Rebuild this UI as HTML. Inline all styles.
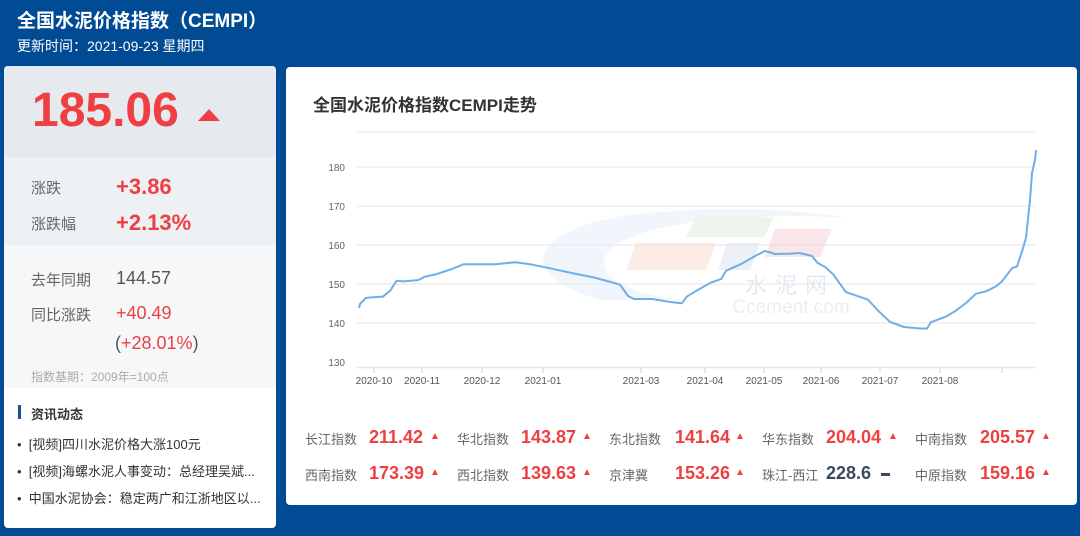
<!DOCTYPE html>
<html><head><meta charset="utf-8"><style>
*{margin:0;padding:0;box-sizing:border-box}
body{width:1080px;height:536px;background:#014a94;font-family:"Liberation Sans","Noto Sans CJK SC",sans-serif;position:relative;overflow:hidden}
.abs{position:absolute;white-space:nowrap}
.red{color:#ee3f42}
.lbl{color:#666;font-size:15px}
</style></head><body>
<div class="abs" style="left:17px;top:6px;color:#fff;font-size:19px;font-weight:bold">全国水泥价格指数（CEMPI）</div>
<div class="abs" style="left:17px;top:36px;color:#fff;font-size:14px">更新时间：2021-09-23 星期四</div>

<div class="abs" style="left:4px;top:66px;width:272px;height:462px;background:#fff;border-radius:4px;overflow:hidden">
 <div style="height:91px;background:#e6eaef"></div>
 <div style="height:88px;background:#eef1f4"></div>
 <div style="height:143px;background:#f5f7f9"></div>
</div>
<div class="abs red" style="left:32px;top:83px;font-size:48px;font-weight:bold">185.06</div>
<div class="abs" style="left:198px;top:109px;width:0;height:0;border-left:11px solid transparent;border-right:11px solid transparent;border-bottom:12px solid #ee3f42"></div>
<div class="abs lbl" style="left:31px;top:177px">涨跌</div>
<div class="abs red" style="left:116px;top:174px;font-size:22px;font-weight:bold">+3.86</div>
<div class="abs lbl" style="left:31px;top:213px">涨跌幅</div>
<div class="abs red" style="left:116px;top:210px;font-size:22px;font-weight:bold">+2.13%</div>
<div class="abs lbl" style="left:31px;top:269px">去年同期</div>
<div class="abs" style="left:116px;top:268px;font-size:18px;color:#555">144.57</div>
<div class="abs lbl" style="left:31px;top:304px">同比涨跌</div>
<div class="abs red" style="left:116px;top:303px;font-size:18px">+40.49</div>
<div class="abs" style="left:115px;top:333px;font-size:18px;color:#555">(<span class="red">+28.01%</span>)</div>
<div class="abs" style="left:31px;top:368px;font-size:12px;color:#aaa">指数基期：2009年=100点</div>
<div class="abs" style="left:18px;top:405px;width:3px;height:14px;background:#1a4d9a"></div>
<div class="abs" style="left:31px;top:404px;font-size:13px;font-weight:bold;color:#333">资讯动态</div>
<div class="abs" style="left:17px;top:434px;font-size:13px;color:#333">•&nbsp; [视频]四川水泥价格大涨100元</div>
<div class="abs" style="left:17px;top:461px;font-size:13px;color:#333">•&nbsp; [视频]海螺水泥人事变动：总经理吴斌...</div>
<div class="abs" style="left:17px;top:488px;font-size:13px;color:#333">•&nbsp; 中国水泥协会：稳定两广和江浙地区以...</div>

<div class="abs" style="left:286px;top:67px;width:791px;height:438px;background:#fff;border-radius:4px"></div>
<div class="abs" style="left:313px;top:91px;font-size:17px;font-weight:bold;color:#333">全国水泥价格指数CEMPI走势</div>

<svg class="abs" style="left:0;top:0" width="1080" height="536">
 <g font-family="Liberation Sans" font-size="10" fill="#666" text-anchor="end">
  <text x="345" y="171">180</text><text x="345" y="210">170</text><text x="345" y="249">160</text><text x="345" y="288">150</text><text x="345" y="327">140</text><text x="345" y="366">130</text>
 </g>
 <g stroke="#e6e6e6" stroke-width="1">
  <line x1="357" y1="132" x2="1035" y2="132"/>
  <line x1="357" y1="167" x2="1035" y2="167"/><line x1="357" y1="206" x2="1035" y2="206"/><line x1="357" y1="245" x2="1035" y2="245"/><line x1="357" y1="284" x2="1035" y2="284"/><line x1="357" y1="323" x2="1035" y2="323"/>
 </g>
 <line x1="357" y1="367.5" x2="1035" y2="367.5" stroke="#dde3ee" stroke-width="1.5"/>
 <g stroke="#c8d3e6"><line x1="374" y1="368" x2="374" y2="373"/><line x1="422" y1="368" x2="422" y2="373"/><line x1="482" y1="368" x2="482" y2="373"/><line x1="543" y1="368" x2="543" y2="373"/><line x1="641" y1="368" x2="641" y2="373"/><line x1="705" y1="368" x2="705" y2="373"/><line x1="764" y1="368" x2="764" y2="373"/><line x1="821" y1="368" x2="821" y2="373"/><line x1="880" y1="368" x2="880" y2="373"/><line x1="940" y1="368" x2="940" y2="373"/><line x1="1002" y1="368" x2="1002" y2="373"/></g>
 <g font-family="Liberation Sans" font-size="10" fill="#555" text-anchor="middle">
  <text x="374" y="384">2020-10</text><text x="422" y="384">2020-11</text><text x="482" y="384">2020-12</text><text x="543" y="384">2021-01</text><text x="641" y="384">2021-03</text><text x="705" y="384">2021-04</text><text x="764" y="384">2021-05</text><text x="821" y="384">2021-06</text><text x="880" y="384">2021-07</text><text x="940" y="384">2021-08</text>
 </g>
 <g opacity="0.5">
  <path d="M600 300 C500 270 540 220 660 212 C740 206 800 210 850 218 C760 212 640 220 610 250 C590 272 620 292 680 300 Z" fill="#e3eef8"/>
  <polygon points="696,217 774,217 764,237 686,237" fill="#e2ecd8"/>
  <polygon points="636,243 716,243 706,270 626,270" fill="#f8dccd"/>
  <polygon points="727,243 760,243 750,270 718,270" fill="#dde3f0"/>
  <polygon points="775,229 832,229 820,257 765,257" fill="#f6cfd2"/>
  <text x="790" y="293" font-size="22" fill="#c9d6e6" font-family="Noto Sans CJK SC" text-anchor="middle" letter-spacing="8">水泥网</text>
  <text x="791" y="313" font-size="19" fill="#d8dde3" text-anchor="middle">Ccement.com</text>
 </g>
 <polyline fill="none" stroke="#6eaee9" stroke-width="2" stroke-linejoin="round" points="359,308 360,304 365.7,298 373,297.3 382.8,296.7 390.2,290.7 396.5,280.8 403.4,281.4 418.1,280.1 424.5,276.8 436.7,274.1 451.5,269.2 463.7,264.2 476,264.2 495.6,264.2 515.2,262.2 529.9,264.2 549.5,268.2 574,273.5 593.6,277.4 608.3,281.4 620,284.7 628,296 634,299 652.4,299 672,302.3 681.8,303.3 686.7,296.7 696.5,290.7 711.3,282.4 721.1,279.1 726,270.8 740.7,264.2 755.4,255.9 765,250.9 775,254 790,253.6 799.5,253 812,256 817.5,262.9 825,266.9 833,274.2 846,292.1 868,299.7 878,310.6 890,321.9 904,327 920,328.5 927,328.5 931,322.2 946,316.6 956,310.6 966,303 976,293.7 986,291.4 996,286.4 1002,281.4 1012,268.2 1017,266.5 1022,251.6 1026,237.7 1030,200 1032,173 1035,160 1036,150"/>
</svg>

<div class="abs" style="left:305px;top:426px;width:770px;font-size:13px;color:#666">
 <div style="height:36px;position:relative">
  <span class="abs" style="left:0;top:3px">长江指数</span><span class="abs red" style="left:64px;top:1px;font-size:18px;font-weight:bold">211.42</span><span class="abs red" style="left:125px;top:5px;font-size:10px">▲</span>
  <span class="abs" style="left:152px;top:3px">华北指数</span><span class="abs red" style="left:216px;top:1px;font-size:18px;font-weight:bold">143.87</span><span class="abs red" style="left:277px;top:5px;font-size:10px">▲</span>
  <span class="abs" style="left:304px;top:3px">东北指数</span><span class="abs red" style="left:370px;top:1px;font-size:18px;font-weight:bold">141.64</span><span class="abs red" style="left:430px;top:5px;font-size:10px">▲</span>
  <span class="abs" style="left:457px;top:3px">华东指数</span><span class="abs red" style="left:521px;top:1px;font-size:18px;font-weight:bold">204.04</span><span class="abs red" style="left:583px;top:5px;font-size:10px">▲</span>
  <span class="abs" style="left:610px;top:3px">中南指数</span><span class="abs red" style="left:675px;top:1px;font-size:18px;font-weight:bold">205.57</span><span class="abs red" style="left:736px;top:5px;font-size:10px">▲</span>
 </div>
 <div style="height:36px;position:relative">
  <span class="abs" style="left:0;top:3px">西南指数</span><span class="abs red" style="left:64px;top:1px;font-size:18px;font-weight:bold">173.39</span><span class="abs red" style="left:125px;top:5px;font-size:10px">▲</span>
  <span class="abs" style="left:152px;top:3px">西北指数</span><span class="abs red" style="left:216px;top:1px;font-size:18px;font-weight:bold">139.63</span><span class="abs red" style="left:277px;top:5px;font-size:10px">▲</span>
  <span class="abs" style="left:304px;top:3px">京津冀</span><span class="abs red" style="left:370px;top:1px;font-size:18px;font-weight:bold">153.26</span><span class="abs red" style="left:430px;top:5px;font-size:10px">▲</span>
  <span class="abs" style="left:457px;top:3px">珠江-西江</span><span class="abs" style="left:521px;top:1px;font-size:18px;font-weight:bold;color:#3a4a5c">228.6</span><span class="abs" style="left:576px;top:11px;width:9px;height:3px;background:#3a4a5c"></span>
  <span class="abs" style="left:610px;top:3px">中原指数</span><span class="abs red" style="left:675px;top:1px;font-size:18px;font-weight:bold">159.16</span><span class="abs red" style="left:736px;top:5px;font-size:10px">▲</span>
 </div>
</div>
</body></html>
